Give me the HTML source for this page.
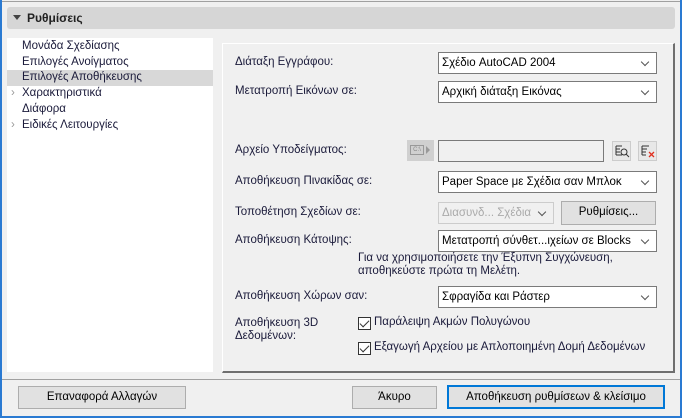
<!DOCTYPE html>
<html><head><meta charset="utf-8"><style>
*{box-sizing:border-box;margin:0;padding:0}
body{width:682px;height:418px;background:#f0f0f0;position:relative;overflow:hidden;font-family:"Liberation Sans","DejaVu Sans",sans-serif;font-size:11.5px;color:#1a1a3a}
.a{position:absolute;white-space:nowrap}
.dd{position:absolute;background:#fff;border:1px solid #7a7a7a;height:22px;padding:4px 0 0 3px;color:#000}
.dd:after{content:"";position:absolute;right:8px;top:6px;width:5px;height:5px;border-right:1px solid #555;border-bottom:1px solid #555;transform:rotate(45deg)}
.btn{position:absolute;background:#e1e1e1;border:1px solid #adadad;text-align:center;color:#000;height:23px;padding-top:4px}
.lbl{position:absolute;white-space:nowrap;color:#1a1a3a}
.cb{position:absolute;width:13px;height:13px;border:1px solid #333;background:#fff}
.cb:after{content:"";position:absolute;left:3px;top:0px;width:4px;height:8px;border-right:1.5px solid #333;border-bottom:1.5px solid #333;transform:rotate(45deg)}
</style></head><body>
<div class="a" style="left:0;top:0;width:2px;height:418px;background:#2a7ad2"></div>
<div class="a" style="right:0;top:0;width:2px;height:418px;background:#2a7ad2"></div>
<div class="a" style="left:0;bottom:0;width:682px;height:2px;background:#2a7ad2"></div>
<div class="a" style="left:2px;top:1px;width:678px;height:1px;background:#a0a0a0"></div>
<div class="a" style="left:7px;top:7px;width:668px;height:22px;background:#d6d6d6;border-radius:3px"></div>
<div class="a" style="left:13px;top:15px;width:0;height:0;border-left:4px solid transparent;border-right:4px solid transparent;border-top:5px solid #444"></div>
<div class="a" style="left:27px;top:11px;font-weight:bold;font-size:12px;color:#222">Ρυθμίσεις</div>

<div class="a" style="left:7px;top:38px;width:206px;height:334px;background:#fff"></div>
<div class="a" style="left:7px;top:70px;width:206px;height:16px;background:#d8d8d8"></div>
<div class="lbl" style="left:22px;top:40px">Μονάδα Σχεδίασης</div>
<div class="lbl" style="left:22px;top:56px">Επιλογές Ανοίγματος</div>
<div class="lbl" style="left:22px;top:71px">Επιλογές Αποθήκευσης</div>
<div class="lbl" style="left:11px;top:87px;color:#999">›</div>
<div class="lbl" style="left:22px;top:87px">Χαρακτηριστικά</div>
<div class="lbl" style="left:22px;top:103px">Διάφορα</div>
<div class="lbl" style="left:11px;top:119px;color:#999">›</div>
<div class="lbl" style="left:22px;top:119px">Ειδικές Λειτουργίες</div>

<div class="a" style="left:222px;top:43px;width:453px;height:330px;border-top:1px solid #fff;border-left:1px solid #fff;border-right:2px solid #6e6e6e;border-bottom:2px solid #6e6e6e"></div>

<div class="lbl" style="left:235px;top:56px">Διάταξη Εγγράφου:</div>
<div class="dd" style="left:438px;top:52px;width:219px">Σχέδιο AutoCAD 2004</div>
<div class="lbl" style="left:235px;top:85px">Μετατροπή Εικόνων σε:</div>
<div class="dd" style="left:438px;top:81px;width:219px">Αρχική διάταξη Εικόνας</div>

<div class="lbl" style="left:235px;top:144px">Αρχείο Υποδείγματος:</div>
<div class="a" style="left:407px;top:140px;width:27px;height:21px;background:#d0d0d0"></div>
<div class="a" style="left:410px;top:145px;width:14px;height:10px;border:1px solid #999;font-size:6px;color:#888;text-align:center;line-height:8px">C:\</div>
<div class="a" style="left:426px;top:146px;width:0;height:0;border-top:4px solid transparent;border-bottom:4px solid transparent;border-left:4px solid #999"></div>
<div class="a" style="left:438px;top:140px;width:166px;height:22px;border:1px solid #7a7a7a;background:#f0f0f0"></div>
<div class="a" style="left:612px;top:141px;width:19px;height:20px;border:1px solid #ccc;background:#e8e8e8"></div>
<svg class="a" style="left:614px;top:143px" width="16" height="16"><path d="M2 3h6M2 6h4M2 9h4M2 12h6M2 3v9" stroke="#333" fill="none"/><circle cx="10" cy="9" r="3" stroke="#333" fill="none"/><path d="M12 11l3 3" stroke="#333"/></svg>
<div class="a" style="left:638px;top:141px;width:19px;height:20px;border:1px solid #ccc;background:#e8e8e8"></div>
<svg class="a" style="left:640px;top:143px" width="16" height="16"><path d="M2 3h7M2 6h5M2 9h4M2 12h4M2 3v9" stroke="#333" fill="none"/><path d="M9 9l5 5M14 9l-5 5" stroke="#e03020" stroke-width="1.3"/></svg>

<div class="lbl" style="left:235px;top:175px">Αποθήκευση Πινακίδας σε:</div>
<div class="dd" style="left:438px;top:171px;width:219px">Paper Space με Σχέδια σαν Μπλοκ</div>

<div class="lbl" style="left:235px;top:206px">Τοποθέτηση Σχεδίων σε:</div>
<div class="dd" style="left:438px;top:202px;width:116px;border-color:#ccc;color:#aaa;background:#f0f0f0">Διασυνδ... Σχέδια</div>
<div class="btn" style="left:561px;top:201px;width:95px;height:24px">Ρυθμίσεις...</div>

<div class="lbl" style="left:235px;top:234px">Αποθήκευση Κάτοψης:</div>
<div class="dd" style="left:438px;top:230px;width:219px">Μετατροπή σύνθετ...ιχείων σε Blocks</div>
<div class="lbl" style="left:358px;top:252px">Για να χρησιμοποιήσετε την Έξυπνη Συγχώνευση,</div>
<div class="lbl" style="left:358px;top:265px">αποθηκεύστε πρώτα τη Μελέτη.</div>

<div class="lbl" style="left:235px;top:290px">Αποθήκευση Χώρων σαν:</div>
<div class="dd" style="left:438px;top:286px;width:219px">Σφραγίδα και Ράστερ</div>

<div class="lbl" style="left:235px;top:317px">Αποθήκευση 3D</div>
<div class="lbl" style="left:235px;top:330px">Δεδομένων:</div>
<div class="cb" style="left:358px;top:317px"></div>
<div class="lbl" style="left:374px;top:316px">Παράλειψη Ακμών Πολυγώνου</div>
<div class="cb" style="left:358px;top:342px"></div>
<div class="lbl" style="left:374px;top:341px">Εξαγωγή Αρχείου με Απλοποιημένη Δομή Δεδομένων</div>

<div class="a" style="left:2px;top:379px;width:678px;height:1px;background:#a0a0a0"></div>
<div class="btn" style="left:18px;top:386px;width:168px">Επαναφορά Αλλαγών</div>
<div class="btn" style="left:352px;top:386px;width:85px">Άκυρο</div>
<div class="btn" style="left:447px;top:385px;width:218px;height:24px;border:2px solid #0078d7">Αποθήκευση ρυθμίσεων &amp; κλείσιμο</div>
</body></html>
